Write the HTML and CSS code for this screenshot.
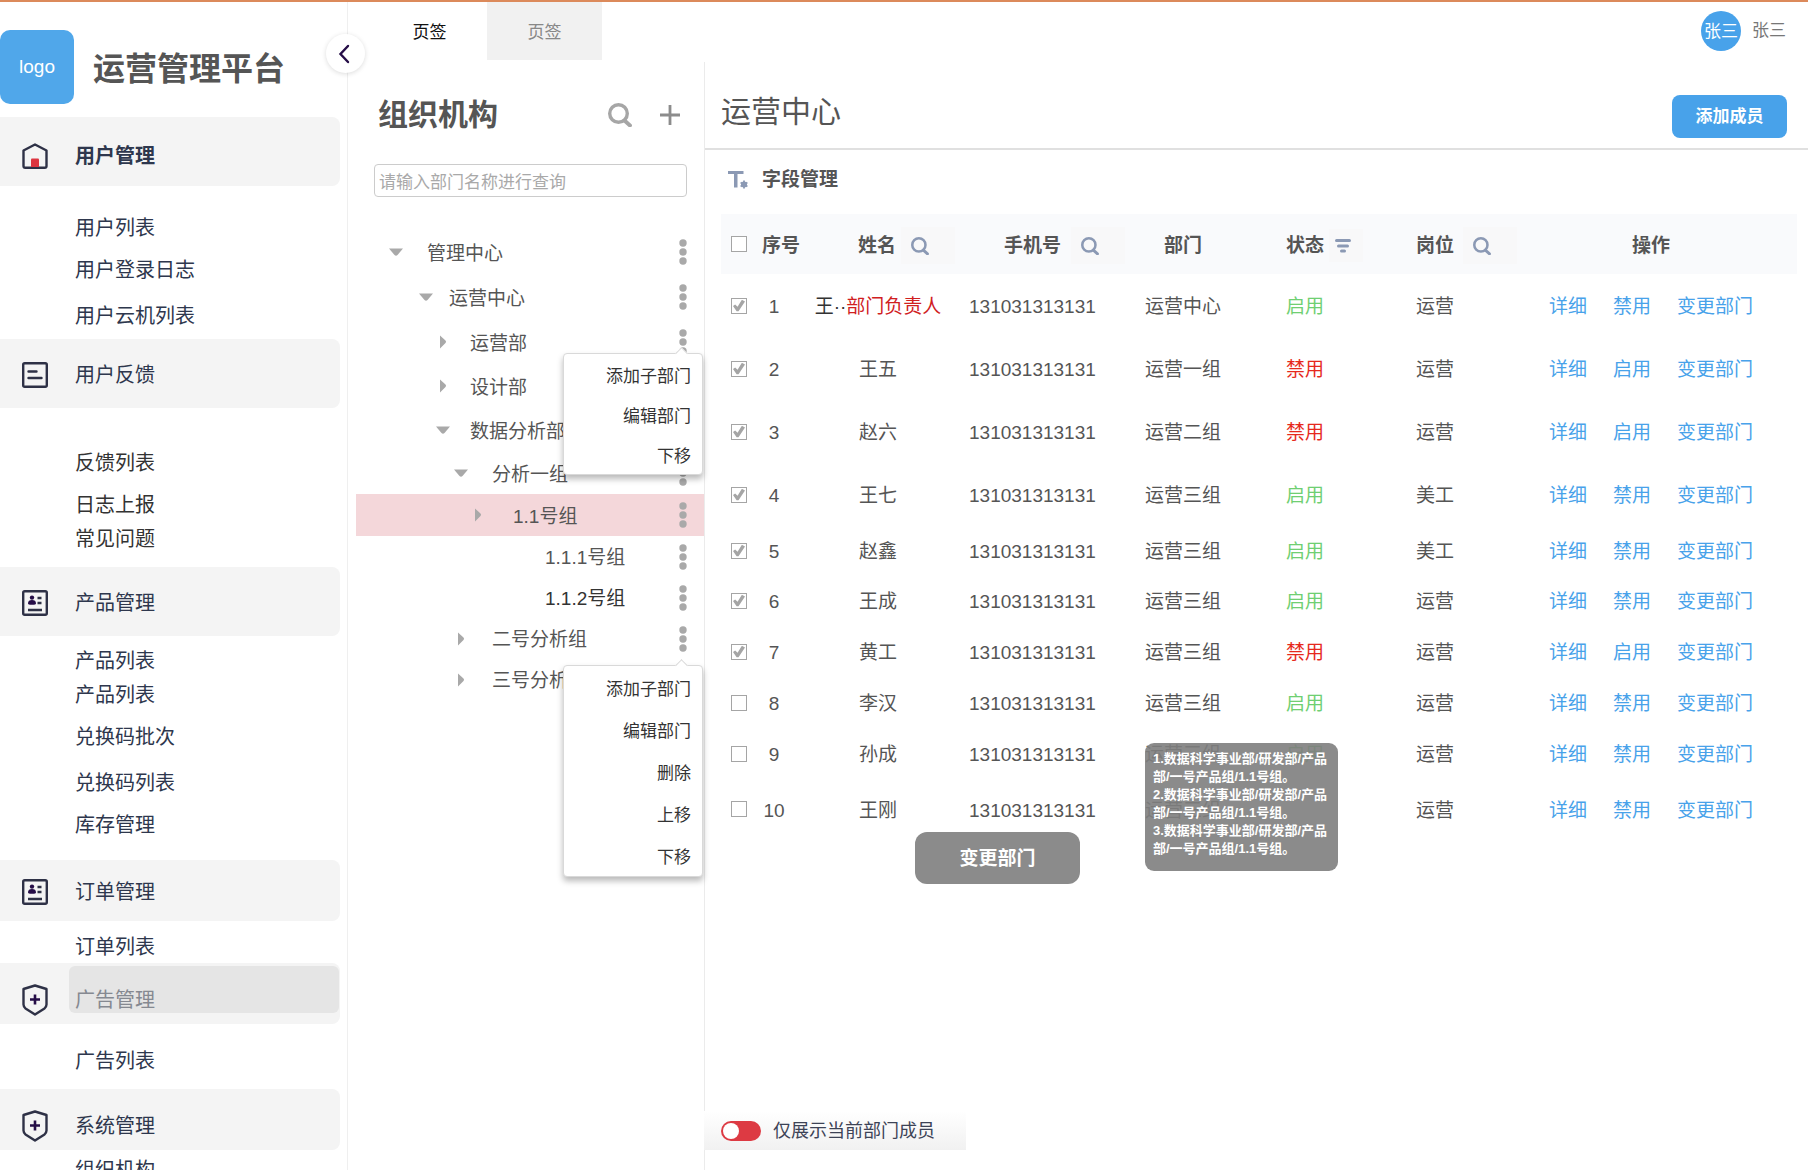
FILE: index.html
```html
<!DOCTYPE html>
<html lang="zh-CN">
<head>
<meta charset="utf-8">
<meta name="viewport" content="width=device-width, initial-scale=1">
<title>运营管理平台</title>
<link rel="stylesheet" href="styles.css">
</head>
<body>
<svg class="sprite" width="0" height="0" aria-hidden="true">
  <symbol id="i-search" viewBox="0 0 24 24"><circle cx="10.500" cy="10.500" r="8.800" fill="none" stroke="currentColor" stroke-width="3.400"/><path d="M16.500 17.500l5.500 5" fill="none" stroke="currentColor" stroke-width="3.800" stroke-linecap="round"/></symbol>
  <symbol id="i-dots" viewBox="0 0 8 26"><circle cx="4" cy="4" r="3.700"/><circle cx="4" cy="13" r="3.700"/><circle cx="4" cy="22" r="3.700"/></symbol>
  <symbol id="i-down" viewBox="0 0 16 16"><path d="M1 4.500h14l-5.500 6.500q-1.500 1.600-3 0z"/></symbol>
  <symbol id="i-right" viewBox="0 0 16 16"><path d="M5 1.500v13l5.500-5.500q1.200-1.300 0-2.400z"/></symbol>
  <symbol id="i-card" viewBox="0 0 26 26"><rect x="1.200" y="1.200" width="23.600" height="23.600" rx="1.500" fill="none" stroke="#2e3146" stroke-width="2.400"/><circle cx="10" cy="7.600" r="2.200" fill="#250d47"/><path d="M6 13.500c0-2.500 1.500-3.500 4-3.500s4 1 4 3.500c0 1-1 1.300-4 1.300s-4-.3-4-1.300z" fill="#250d47"/><path d="M15.500 8h4M15.500 13h4M6 20h14" stroke="#2e3146" stroke-width="2.400"/></symbol>
  <symbol id="i-shield" viewBox="0 0 26 32"><path d="M13 1.500L24.500 5v15.500q0 2-2 4L13 30.500l-9.500-6q-2-2-2-4V5z" fill="none" stroke="#2e3146" stroke-width="2.400" stroke-linejoin="round"/><path d="M8 15.500h10M13 10.500v10" stroke="#250d47" stroke-width="2.600"/></symbol>
</svg>

<div class="app">
  <aside class="sidebar">
    <div class="brand"><div class="logo">logo</div><h1>运营管理平台</h1></div>
    <nav>
      <section class="group users">
        <button class="group-head strong"><svg width="26" height="26" viewBox="0 0 26 26"><path d="M13 1.500L24.500 7.500V23q0 1.800-1.800 1.800H3.300Q1.500 24.800 1.500 23V7.500z" fill="none" stroke="#2e3146" stroke-width="2.400" stroke-linejoin="round"/><path d="M9 16.500q0-1 1-1h6q1 0 1 1V24H9z" fill="#dc3540"/></svg><span>用户管理</span></button>
        <ul><li><a href="#">用户列表</a></li><li class="gap-m"><a href="#">用户登录日志</a></li><li class="gap-l"><a href="#">用户云机列表</a></li></ul>
      </section>
      <section class="group feedback">
        <button class="group-head"><svg width="26" height="26" viewBox="0 0 26 26"><rect x="1.200" y="1.200" width="23.600" height="23.600" rx="1.500" fill="none" stroke="#2e3146" stroke-width="2.400"/><path d="M6.500 9.500h8M6.500 16h13" stroke="#2e3146" stroke-width="2.400" stroke-linecap="round"/></svg><span>用户反馈</span></button>
        <ul><li><a href="#">反馈列表</a></li><li class="gap-m"><a href="#">日志上报</a></li><li class="gap-s"><a href="#">常见问题</a></li></ul>
      </section>
      <section class="group product">
        <button class="group-head"><svg width="26" height="26"><use href="#i-card"/></svg><span>产品管理</span></button>
        <ul><li><a href="#">产品列表</a></li><li class="gap-s"><a href="#">产品列表</a></li><li class="gap-m"><a href="#">兑换码批次</a></li><li class="gap-l"><a href="#">兑换码列表</a></li><li class="gap-m"><a href="#">库存管理</a></li></ul>
      </section>
      <section class="group order">
        <button class="group-head slim"><svg width="26" height="26"><use href="#i-card"/></svg><span>订单管理</span></button>
        <ul><li><a href="#">订单列表</a></li></ul>
      </section>
      <section class="group ads">
        <button class="group-head slim low hovered"><svg width="26" height="32"><use href="#i-shield"/></svg><span>广告管理</span></button>
        <ul><li><a href="#">广告列表</a></li></ul>
      </section>
      <section class="group system">
        <button class="group-head slim low"><svg width="26" height="32"><use href="#i-shield"/></svg><span>系统管理</span></button>
        <ul><li><a href="#">组织机构</a></li></ul>
      </section>
    </nav>
  </aside>
  <button class="collapse" aria-label="收起菜单"><svg width="12" height="20" viewBox="0 0 12 20"><path d="M10 2L2.500 10l7.500 8" fill="none" stroke="#250d47" stroke-width="2.400" stroke-linecap="round"/></svg></button>

  <div class="workspace">
    <header class="topbar">
      <div class="tabs"><button class="tab active">页签</button><button class="tab">页签</button></div>
      <div class="user"><span class="avatar">张三</span><span>张三</span></div>
    </header>
    <div class="panels">
      <section class="org">
        <div class="org-head">
          <h2>组织机构</h2>
          <button class="icon-btn" aria-label="搜索"><svg width="24" height="24"><use href="#i-search"/></svg></button>
          <button class="icon-btn" aria-label="新增"><svg width="20" height="20" viewBox="0 0 20 20"><path d="M0 10h20M10 0v20" stroke="#8c8c8c" stroke-width="2.800"/></svg></button>
        </div>
        <input class="org-search" type="text" placeholder="请输入部门名称进行查询" aria-label="部门名称">
        <ul class="tree">
          <li class="l1"><svg class="caret"><use href="#i-down"/></svg><span>管理中心</span><button class="more" aria-label="更多"><svg><use href="#i-dots"/></svg></button></li>
          <li class="l2"><svg class="caret"><use href="#i-down"/></svg><span>运营中心</span><button class="more" aria-label="更多"><svg><use href="#i-dots"/></svg></button></li>
          <li class="l3"><svg class="caret"><use href="#i-right"/></svg><span>运营部</span><button class="more" aria-label="更多"><svg><use href="#i-dots"/></svg></button>
            <div class="menu short"><button>添加子部门</button><button>编辑部门</button><button>下移</button></div></li>
          <li class="l3"><svg class="caret"><use href="#i-right"/></svg><span>设计部</span></li>
          <li class="l3"><svg class="caret"><use href="#i-down"/></svg><span>数据分析部</span></li>
          <li class="l4 snug"><svg class="caret"><use href="#i-down"/></svg><span>分析一组</span><button class="more" aria-label="更多"><svg><use href="#i-dots"/></svg></button></li>
          <li class="l5 snug selected"><svg class="caret"><use href="#i-right"/></svg><span>1.1号组</span><button class="more" aria-label="更多"><svg><use href="#i-dots"/></svg></button></li>
          <li class="l6 tight"><span>1.1.1号组</span><button class="more" aria-label="更多"><svg><use href="#i-dots"/></svg></button></li>
          <li class="l6 tight dark"><span>1.1.2号组</span><button class="more" aria-label="更多"><svg><use href="#i-dots"/></svg></button></li>
          <li class="l4 tight"><svg class="caret"><use href="#i-right"/></svg><span>二号分析组</span><button class="more" aria-label="更多"><svg><use href="#i-dots"/></svg></button>
            <div class="menu long"><button>添加子部门</button><button>编辑部门</button><button>删除</button><button>上移</button><button>下移</button></div></li>
          <li class="l4 tight"><svg class="caret"><use href="#i-right"/></svg><span>三号分析组</span></li>
        </ul>
      </section>

      <main class="members">
        <div class="members-head"><h2>运营中心</h2><button class="primary">添加成员</button></div>
        <button class="fields"><svg width="20" height="20" viewBox="0 0 20 20" fill="#8b99b4"><path d="M0 1h15.500v3H9.500v13.500H6V4H0z"/><circle cx="16" cy="14.500" r="3"/><path d="M16 10.600v7.800M12.600 12.500l6.800 4M19.400 12.500l-6.800 4" stroke="#8b99b4" stroke-width="1.800"/></svg><span>字段管理</span></button>
        <div class="table-wrap">
          <table>
            <colgroup><col class="c-check"><col class="c-no"><col class="c-name"><col class="c-phone"><col class="c-dept"><col class="c-state"><col class="c-post"><col></colgroup>
            <thead><tr>
              <th class="check"><input type="checkbox" aria-label="全选"></th>
              <th class="no">序号</th>
              <th class="name"><div>姓名<button class="tool" aria-label="搜索姓名"><svg width="18" height="18"><use href="#i-search"/></svg></button></div></th>
              <th class="phone"><div>手机号<button class="tool" aria-label="搜索手机号"><svg width="18" height="18"><use href="#i-search"/></svg></button></div></th>
              <th class="dept">部门</th>
              <th class="state"><div>状态<button class="tool filter" aria-label="筛选状态"><svg width="16" height="14" viewBox="0 0 16 14"><path d="M1.500 1.500h13M3.500 7h9M6.500 12h3" stroke="currentColor" stroke-width="3" stroke-linecap="round"/></svg></button></div></th>
              <th class="post"><div>岗位<button class="tool" aria-label="搜索岗位"><svg width="18" height="18"><use href="#i-search"/></svg></button></div></th>
              <th class="acts">操作</th>
            </tr></thead>
            <tbody>
              <tr><td class="check"><input type="checkbox" checked aria-label="选择 1"></td><td class="no">1</td><td class="name"><b>王··</b><em>部门负责人</em></td><td class="phone">131031313131</td><td class="dept">运营中心</td><td class="state on">启用</td><td class="post">运营</td><td class="acts"><div><a href="#">详细</a><a href="#">禁用</a><a href="#">变更部门</a></div></td></tr>
              <tr><td class="check"><input type="checkbox" checked aria-label="选择 2"></td><td class="no">2</td><td class="name">王五</td><td class="phone">131031313131</td><td class="dept">运营一组</td><td class="state off">禁用</td><td class="post">运营</td><td class="acts"><div><a href="#">详细</a><a href="#">启用</a><a href="#">变更部门</a></div></td></tr>
              <tr><td class="check"><input type="checkbox" checked aria-label="选择 3"></td><td class="no">3</td><td class="name">赵六</td><td class="phone">131031313131</td><td class="dept">运营二组</td><td class="state off">禁用</td><td class="post">运营</td><td class="acts"><div><a href="#">详细</a><a href="#">启用</a><a href="#">变更部门</a></div></td></tr>
              <tr><td class="check"><input type="checkbox" checked aria-label="选择 4"></td><td class="no">4</td><td class="name">王七</td><td class="phone">131031313131</td><td class="dept">运营三组</td><td class="state on">启用</td><td class="post">美工</td><td class="acts"><div><a href="#">详细</a><a href="#">禁用</a><a href="#">变更部门</a></div></td></tr>
              <tr><td class="check"><input type="checkbox" checked aria-label="选择 5"></td><td class="no">5</td><td class="name">赵鑫</td><td class="phone">131031313131</td><td class="dept">运营三组</td><td class="state on">启用</td><td class="post">美工</td><td class="acts"><div><a href="#">详细</a><a href="#">禁用</a><a href="#">变更部门</a></div></td></tr>
              <tr><td class="check"><input type="checkbox" checked aria-label="选择 6"></td><td class="no">6</td><td class="name">王成</td><td class="phone">131031313131</td><td class="dept">运营三组</td><td class="state on">启用</td><td class="post">运营</td><td class="acts"><div><a href="#">详细</a><a href="#">禁用</a><a href="#">变更部门</a></div></td></tr>
              <tr><td class="check"><input type="checkbox" checked aria-label="选择 7"></td><td class="no">7</td><td class="name">黄工</td><td class="phone">131031313131</td><td class="dept">运营三组</td><td class="state off">禁用</td><td class="post">运营</td><td class="acts"><div><a href="#">详细</a><a href="#">启用</a><a href="#">变更部门</a></div></td></tr>
              <tr><td class="check"><input type="checkbox" aria-label="选择 8"></td><td class="no">8</td><td class="name">李汉</td><td class="phone">131031313131</td><td class="dept">运营三组</td><td class="state on">启用</td><td class="post">运营</td><td class="acts"><div><a href="#">详细</a><a href="#">禁用</a><a href="#">变更部门</a></div></td></tr>
              <tr><td class="check"><input type="checkbox" aria-label="选择 9"></td><td class="no">9</td><td class="name">孙成</td><td class="phone">131031313131</td><td class="dept">运营三组<div class="tooltip" role="tooltip"><p>1.数据科学事业部/研发部/产品部/一号产品组/1.1号组。</p><p>2.数据科学事业部/研发部/产品部/一号产品组/1.1号组。</p><p>3.数据科学事业部/研发部/产品部/一号产品组/1.1号组。</p></div></td><td class="state on">启用</td><td class="post">运营</td><td class="acts"><div><a href="#">详细</a><a href="#">禁用</a><a href="#">变更部门</a></div></td></tr>
              <tr><td class="check"><input type="checkbox" aria-label="选择 10"></td><td class="no">10</td><td class="name">王刚</td><td class="phone">131031313131</td><td class="dept">运营三组</td><td class="state"></td><td class="post">运营</td><td class="acts"><div><a href="#">详细</a><a href="#">禁用</a><a href="#">变更部门</a></div></td></tr>
            </tbody>
          </table>
          <button class="batch">变更部门</button>
        </div>
        <label class="only-current"><input type="checkbox" role="switch"><span>仅展示当前部门成员</span></label>
      </main>
    </div>
  </div>
</div>
</body>
</html>
```

FILE: styles.css
```css
* { box-sizing: border-box; }

body {
  margin: 0;
  font-family: "Liberation Sans", "Noto Sans CJK SC", sans-serif;
  font-size: 19px;
  line-height: 28px;
  color: #555;
  background: #fff;
}

h1, h2, p, ul { margin: 0; padding: 0; }
ul { list-style: none; }
a { color: inherit; text-decoration: none; }
button { margin: 0; padding: 0; border: 0; background: none; font: inherit; color: inherit; cursor: pointer; }
svg { display: block; flex: none; }
.sprite { position: absolute; }

.app {
  position: relative;
  display: flex;
  height: 100vh;
  border-top: 2px solid #dc8a5b;
}

/* Sidebar */
.sidebar {
  flex: none;
  width: 348px;
  border-right: 1px solid #efefef;
  overflow: hidden;
  color: #2e374d;
  font-size: 20px;
}
.brand { display: flex; align-items: center; gap: 19px; padding: 28px 0 13px; }
.brand h1 { padding-top: 4px; font-size: 32px; line-height: 40px; font-weight: 700; color: #555; }
.logo {
  display: grid;
  place-items: center;
  width: 74px;
  height: 74px;
  border-radius: 10px;
  background: #50a7ea;
  color: #fff;
  font-size: 19px;
}
.group-head {
  display: flex;
  align-items: center;
  gap: 27px;
  width: 340px;
  height: 69px;
  padding: 2px 0 0 22px;
  border-radius: 0 8px 8px 0;
  background: #f4f4f4;
}
.group-head.slim { height: 61px; }
.group-head.low { padding-top: 12px; }
.group-head.strong { padding-top: 8px; font-weight: 700; }
.group-head.hovered { position: relative; color: #858991; }
.group-head.hovered span { position: relative; }
.group-head.hovered::before {
  content: "";
  position: absolute;
  inset: 3px 1px 11px 69px;
  border-radius: 6px;
  background: #e5e5e5;
}
.group li { height: 30px; padding: 2px 0 0 75px; line-height: 28px; }
.group .gap-s { margin-top: 4px; }
.group .gap-m { margin-top: 12px; }
.group .gap-l { margin-top: 16px; }
.users ul { padding: 26px 0 9px; }
.feedback ul { padding: 39px 0 14px; color: #333; }
.product ul { padding: 9px 0 21px; }
.order ul { padding: 10px 0 2px; }
.ads ul { padding: 21px 0 14px; }
.system ul { padding-top: 4px; }

.collapse {
  position: absolute;
  top: 32px;
  left: 326px;
  display: grid;
  place-items: center;
  width: 39px;
  height: 39px;
  padding-right: 3px;
  border-radius: 50%;
  background: #fff;
  box-shadow: 0 1px 5px rgba(0, 0, 0, .14);
}

/* Top bar */
.workspace { display: flex; flex: 1; flex-direction: column; min-width: 0; }
.topbar {
  display: flex;
  flex: none;
  justify-content: space-between;
  height: 60px;
  padding: 0 22px 0 24px;
  font-size: 17px;
}
.tabs { display: flex; height: 58px; }
.tab { width: 115px; padding-top: 4px; background: #f1f1f1; color: #888; }
.tab.active { background: #fff; color: #111; }
.user { display: flex; align-items: center; gap: 11px; padding-bottom: 2px; color: #777; }
.avatar {
  display: grid;
  place-items: center;
  width: 40px;
  height: 40px;
  padding-top: 2px;
  border-radius: 50%;
  background: #48a2ea;
  color: #fff;
}
.panels { display: flex; flex: 1; min-height: 0; }

/* Organisation tree */
.org { flex: none; width: 357px; border-right: 1px solid #ebebeb; }
.org-head { display: flex; align-items: center; gap: 28px; padding: 33px 24px 0 30px; }
.org-head h2 { flex: 1; font-size: 30px; line-height: 40px; font-weight: 700; }
.icon-btn { color: #a6a6a6; }
.org-search {
  display: block;
  width: 313px;
  height: 33px;
  margin: 29px 0 0 26px;
  padding: 5px 5px 0 4px;
  border: 1px solid #ccc;
  border-radius: 4px;
  font: inherit;
  font-size: 17px;
}
.org-search::placeholder { color: #a9a9a9; }
.tree { padding: 33px 0 0 8px; }
.tree li { position: relative; display: flex; align-items: center; height: 44px; padding-right: 17px; }
.tree span { padding-top: 3px; }
.tree .l2 { height: 46px; }
.tree .snug { height: 42px; }
.tree .tight { height: 41px; }
.tree .selected { background: #f4d7da; }
.tree .dark { color: #333; }
.caret { width: 16px; height: 16px; fill: #a9a9a9; }
.more { margin-left: auto; }
.more svg { width: 8px; height: 26px; fill: #a9a9a9; }
.l1 { padding-left: 32px; gap: 23px; }
.l2 { padding-left: 62px; gap: 15px; }
.l3 { padding-left: 79px; gap: 19px; }
.l4 { padding-left: 97px; gap: 23px; }
.l5 { padding-left: 114px; gap: 27px; }
.l6 { padding-left: 189px; }

.menu {
  position: absolute;
  right: 1px;
  z-index: 2;
  display: flex;
  flex-direction: column;
  width: 140px;
  border: 1px solid #d9d9d9;
  border-radius: 4px;
  background: #fff;
  box-shadow: 0 4px 6px rgba(0, 0, 0, .28);
  color: #333;
  font-size: 17px;
}
.menu::before {
  content: "";
  position: absolute;
  top: -5px;
  right: 16px;
  width: 8px;
  height: 8px;
  border: 1px solid #d9d9d9;
  border-width: 1px 0 0 1px;
  background: #fff;
  transform: rotate(45deg);
}
.menu button { height: 42px; padding: 5px 11px 0 0; text-align: right; }
.menu.short { top: 33px; }
.menu.short button { height: 40px; }
.menu.long { top: 47px; }

/* Member list */
.members { display: flex; flex: 1; flex-direction: column; align-items: flex-start; min-width: 0; }
.members-head {
  display: flex;
  align-items: center;
  justify-content: space-between;
  width: 100%;
  height: 88px;
  padding: 22px 21px 0 16px;
  border-bottom: 2px solid #e0e0e0;
}
.members-head h2 { padding-bottom: 9px; font-size: 30px; line-height: 40px; font-weight: 400; }
.primary {
  width: 115px;
  height: 43px;
  padding-top: 2px;
  border-radius: 8px;
  background: #48a2ea;
  color: #fff;
  font-size: 17px;
  font-weight: 700;
}
.fields { display: flex; align-items: center; gap: 14px; padding: 16px 0 20px 23px; font-weight: 700; }
.table-wrap { position: relative; width: 100%; padding: 0 11px 0 16px; }
table { width: 100%; border-collapse: collapse; table-layout: fixed; }
.c-check { width: 36px; }
.c-no { width: 43px; }
.c-name { width: 156px; }
.c-phone { width: 170px; }
.c-dept { width: 144px; }
.c-state { width: 130px; }
.c-post { width: 134px; }
th, td { padding: 3px 0 0; text-align: left; white-space: nowrap; }
th { height: 60px; background: #f9fafc; }
th div { display: flex; align-items: center; }
td { height: 63px; }
tr:nth-child(n+5) td { height: 51px; }
tr:nth-child(5) td { height: 49px; }
tr:nth-child(10) td { height: 60px; }
.check { padding: 0 0 0 10px; }
th.no { padding-left: 5px; }
td.no { padding-right: 9px; text-align: center; }
td.name { text-align: center; }
td.name b { color: #333; font-weight: 400; }
td.name em { color: #d0201f; font-style: normal; }
td.phone { padding-left: 13px; }
td.dept { position: relative; padding-left: 19px; }
td.acts { padding-left: 15px; color: #48a2ea; }
td.acts div { display: flex; gap: 26px; }
.state, .post { padding-left: 16px; }
.state.on { color: #6fcf72; }
.state.off { color: #e6291c; }
th.name { padding-left: 58px; }
th.name div { gap: 5px; }
th.phone { padding-left: 48px; }
th.phone div { gap: 10px; }
th.dept { padding-left: 38px; }
th.state div { gap: 5px; }
th.post div { gap: 9px; }
th.acts { padding-left: 98px; }
.tool { width: 54px; height: 37px; padding-left: 10px; background: #f8f8f9; color: #8b99b4; }
.tool.filter { width: 34px; height: 33px; padding-left: 6px; }

.check input {
  display: grid;
  place-items: center;
  appearance: none;
  width: 16px;
  height: 16px;
  margin: 0;
  border: 1px solid #a5a5a5;
  background: #fff;
}
.check input:checked::before {
  content: "";
  width: 12px;
  height: 12px;
  background: #a5a5a5;
  clip-path: polygon(0 55%, 18% 42%, 38% 60%, 74% 2%, 100% 16%, 46% 98%, 30% 98%);
}

.tooltip {
  position: absolute;
  top: 15px;
  left: 19px;
  z-index: 1;
  width: 193px;
  height: 128px;
  padding: 7px 6px 0 8px;
  border-radius: 9px;
  background: rgba(126, 126, 126, .9);
  color: #fff;
  font-size: 13px;
  line-height: 18px;
  font-weight: 700;
  white-space: normal;
  word-break: break-all;
}
.batch {
  position: absolute;
  top: 618px;
  left: 210px;
  width: 165px;
  height: 52px;
  padding-top: 2px;
  border-radius: 12px;
  background: #8b8b8b;
  color: #fff;
  font-weight: 700;
}
.only-current {
  display: flex;
  align-items: center;
  gap: 12px;
  width: 262px;
  height: 39px;
  margin: auto 0 20px -1px;
  padding-left: 17px;
  background: linear-gradient(#fff, #f1f1f1);
  color: #3d4356;
  font-size: 18px;
}
.only-current input {
  display: flex;
  align-items: center;
  appearance: none;
  width: 40px;
  height: 20px;
  margin: 0;
  padding: 2px;
  border-radius: 10px;
  background: #dd3a43;
}
.only-current input::before { content: ""; width: 16px; height: 16px; border-radius: 50%; background: #fff; }
.only-current input:checked { justify-content: flex-end; }
```
